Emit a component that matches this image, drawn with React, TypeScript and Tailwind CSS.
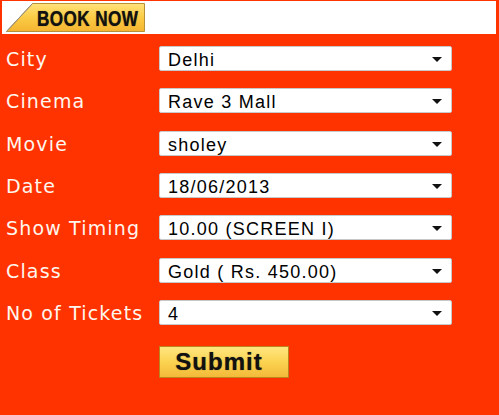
import React from "react";

const rows: [string, string][] = [
  ["City", "Delhi"],
  ["Cinema", "Rave 3 Mall"],
  ["Movie", "sholey"],
  ["Date", "18/06/2013"],
  ["Show Timing", "10.00 (SCREEN I)"],
  ["Class", "Gold ( Rs. 450.00)"],
  ["No of Tickets", "4"],
];

function Select({ value }: { value: string }) {
  return (
    <div className="relative flex h-[25px] w-[293px] items-center rounded-[2px] border border-[#c8c8c8] bg-white pl-[8px] text-[18px] leading-none tracking-[1.25px] text-black [font-family:'Liberation_Sans',Arial,sans-serif]">
      <span className="pt-[3px]">{value}</span>
      <svg
        className="absolute right-[9px] top-[10px]"
        width="10"
        height="5"
        viewBox="0 0 10 5"
      >
        <path d="M0 0 L10 0 L5 5 Z" fill="#111" />
      </svg>
    </div>
  );
}

export default function App() {
  return (
    <div className="h-[415px] w-[499px] overflow-hidden bg-[#ff3300]">
      <div className="ml-[2px] mt-[1px] flex h-[33px] w-[494px] items-start bg-white">
        <div className="relative ml-[4px] mt-[2px] h-[29px] w-[139px]">
          <svg
            className="absolute inset-0"
            width="139"
            height="29"
            viewBox="0 0 139 29"
          >
            <defs>
              <linearGradient id="bk" x1="0" y1="0" x2="0" y2="1">
                <stop offset="0" stopColor="#ffe27a" />
                <stop offset="0.5" stopColor="#fbcb45" />
                <stop offset="1" stopColor="#f4b531" />
              </linearGradient>
            </defs>
            <path
              d="M26.5 0.5 L138.5 0.5 L138.5 28.5 L0.5 28.5 Z"
              fill="url(#bk)"
              stroke="#b89038"
              strokeWidth="1"
            />
            <path d="M0.5 28.5 L26.5 0.5" stroke="#8c8c8c" strokeWidth="1" />
          </svg>
          <span className="absolute left-[31px] top-[5px] origin-left scale-x-[0.78] whitespace-nowrap text-[22px] font-bold leading-none tracking-[0.5px] text-[#111] [font-family:'Liberation_Sans',Arial,sans-serif] [text-shadow:0_0_1px_rgba(0,0,0,0.6)]">
            BOOK NOW
          </span>
        </div>
      </div>

      <div className="mt-[12px] flex flex-col gap-[17.33px]">
        {rows.map(([label, value]) => (
          <div key={label} className="flex items-center">
            <div className="w-[159px] pl-[6px] pt-[2px] text-[19px] leading-none tracking-[1.15px] text-[#fff6ee] [font-family:'DejaVu_Sans',Verdana,sans-serif]">
              {label}
            </div>
            <Select value={value} />
          </div>
        ))}
      </div>

      <div className="ml-[159px] mt-[21px] flex h-[32px] w-[130px] items-center justify-center border border-[#b8861c] bg-gradient-to-b from-[#ffe680] via-[#fbd350] to-[#f3b93a] pr-[10px]">
        <span className="text-[24px] font-bold leading-none tracking-[1px] text-[#111] [font-family:'Liberation_Sans',Arial,sans-serif] [text-shadow:0_0_1px_rgba(0,0,0,0.6)]">
          Submit
        </span>
      </div>
    </div>
  );
}
